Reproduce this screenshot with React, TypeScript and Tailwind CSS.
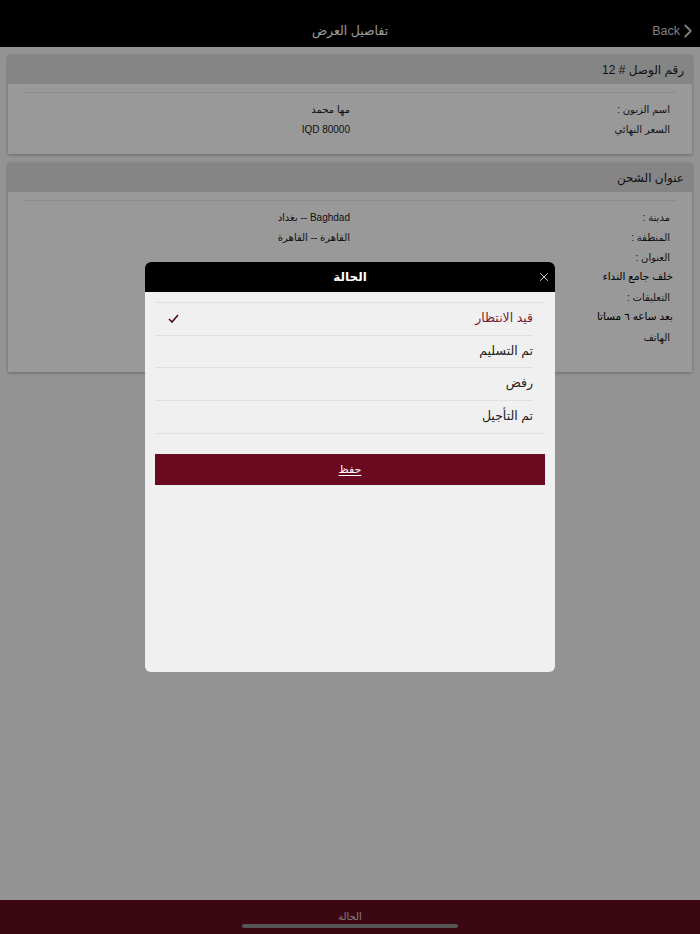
import { X, ChevronRight } from 'lucide-react';

const font = { fontFamily: '"Liberation Sans", "DejaVu Sans", sans-serif' };

interface Row {
  label: string;
  value?: string;
  strong?: boolean;
}

const orderRows: Row[] = [
  { label: 'اسم الزبون :', value: 'مها محمد' },
  { label: 'السعر النهائي', value: 'IQD 80000' },
];

const shippingRows: Row[] = [
  { label: 'مدينة :', value: 'Baghdad -- بغداد' },
  { label: 'المنطقة :', value: 'القاهرة -- القاهرة' },
  { label: 'العنوان :' },
  { label: 'خلف جامع النداء', strong: true },
  { label: 'التعليقات :' },
  { label: 'بعد ساعه ٦ مساتا', strong: true },
  { label: 'الهاتف' },
];

const statuses = ['قيد الانتظار', 'تم التسليم', 'رفض', 'تم التأجيل'];

function Card({ title, rows, bottom }: { title: string; rows: Row[]; bottom: string }) {
  return (
    <div className="mx-2 bg-white shadow-[0_1px_3px_rgba(0,0,0,0.3)]">
      <div className="h-[29px] bg-[#dedede] flex items-center px-2 text-[12px] text-[#222]">{title}</div>
      <div className={`px-[15px] pt-2 ${bottom}`}>
        <div className="border-t border-[#ececec] pt-[6px]">
          {rows.map((r, i) => (
            <div key={i} className="grid grid-cols-2 h-5 items-center text-[10px] text-[#222]">
              <div className={r.strong ? 'pr-[4px] text-black text-[10.5px]' : 'pr-[7px]'}>{r.label}</div>
              <div>{r.value ?? ''}</div>
            </div>
          ))}
        </div>
      </div>
    </div>
  );
}

export default function App() {
  return (
    <div dir="rtl" style={font} className="relative w-[700px] h-[934px] bg-[#f5f5f5] overflow-hidden flex flex-col">
      <div className="h-[47px] bg-black relative flex items-end justify-center pb-[6px] shrink-0">
        <span className="text-white text-[12.5px]">تفاصيل العرض</span>
        <div dir="ltr" className="absolute right-[1px] bottom-[5px] flex items-center text-[#d6d6d6] text-[12.5px]">
          <span>Back</span>
          <ChevronRight size={22} strokeWidth={2} className="-ml-[3px]" />
        </div>
      </div>

      <div className="flex flex-col gap-[9px] pt-2 flex-1">
        <Card title="رقم الوصل # 12" rows={orderRows} bottom="pb-[15px]" />
        <Card title="عنوان الشحن" rows={shippingRows} bottom="pb-[25px]" />
      </div>

      <div className="h-[34px] bg-[#620d21] relative flex justify-center pt-[9px] shrink-0">
        <span className="text-[#d8d8d8] text-[10px]">الحالة</span>
      </div>

      {/* dimming overlay */}
      <div className="absolute inset-0 bg-black/40" />

      <div className="absolute left-[242px] top-[924px] w-[216px] h-[4px] rounded-full bg-[#555]" />

      {/* status dialog */}
      <div className="absolute left-[145px] top-[262px] w-[410px] h-[410px] rounded-[6px] overflow-hidden bg-[#f0f0f0] flex flex-col">
        <div className="h-[30px] bg-black relative flex items-center justify-center shrink-0">
          <span className="text-white text-[12px] font-semibold">الحالة</span>
          <X size={14} strokeWidth={1.4} className="absolute right-[4px] text-white" />
        </div>
        <div className="px-[10px] pt-[10px]">
          <div className="border-y border-[#e0e0e0]">
            {statuses.map((s, i) => (
              <div
                key={s}
                className={`h-[32.5px] ml-0 mr-[12px] pl-[13px] flex items-center justify-between ${
                  i < statuses.length - 1 ? 'border-b border-[#e0e0e0]' : ''
                }`}
              >
                <span className={`text-[12.5px] ${i === 0 ? 'text-[#7a1c33]' : 'text-[#222]'}`}>{s}</span>
                {i === 0 && (
                  <svg width="11" height="9" viewBox="0 0 11 9">
                    <path d="M1 5 L4 8 L10 1" fill="none" stroke="#4a0a18" strokeWidth="1.6" />
                  </svg>
                )}
              </div>
            ))}
          </div>
          <button className="mt-[20px] w-full h-[31px] bg-[#6a0a20] text-white text-[11px] underline underline-offset-2">
            حفظ
          </button>
        </div>
      </div>
    </div>
  );
}
